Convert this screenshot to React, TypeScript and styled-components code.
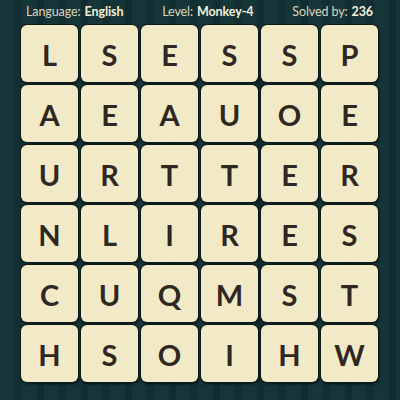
import React from "react";
import styled, { createGlobalStyle } from "styled-components";

const Global = createGlobalStyle`
  html, body { margin: 0; padding: 0; }
  body {
    width: 400px;
    height: 400px;
    overflow: hidden;
    background-color: #163337;
    background-image: repeating-linear-gradient(
      to right,
      #173639 0px, #173639 14px,
      #132f33 14px, #132f33 22px,
      #163538 22px, #163538 37px,
      #122d31 37px, #122d31 44px
    );
    font-family: "Lato", "Noto Sans", sans-serif;
  }
`;

const Page = styled.div`
  width: 400px;
  height: 400px;
  display: flex;
  flex-direction: column;
`;

const Header = styled.div`
  height: 25px;
  display: flex;
  align-items: center;
  justify-content: space-between;
  padding: 0 27px 2px 26px;
  box-sizing: border-box;
  font-size: 12.5px;
  letter-spacing: -0.1px;
  color: #d9d6bd;
`;

const Stat = styled.span`
  white-space: nowrap;
`;

const Value = styled.b`
  font-weight: 700;
  color: #f3efd9;
  margin-left: 4px;
`;

const Board = styled.div`
  display: grid;
  grid-template-columns: repeat(6, 57px);
  grid-auto-rows: 57px;
  gap: 3px;
  margin-left: 21px;
`;

const Tile = styled.div`
  background: #f2eac6;
  border-radius: 6px;
  box-shadow: 0 0 0 1px #0c1a1c, 1px 2px 3px rgba(0, 0, 0, 0.65);
  display: flex;
  align-items: center;
  justify-content: center;
  font-family: "Lato", "Noto Sans", sans-serif;
  font-weight: 700;
  font-size: 29px;
  color: #2f2822;
  padding-top: 1px;
  box-sizing: border-box;
`;

const rows = ["LSESSP", "AEAUOE", "URTTER", "NLIRES", "CUQMST", "HSOIHW"];

export default function App() {
  return (
    <Page>
      <Global />
      <Header>
        <Stat>
          Language:<Value>English</Value>
        </Stat>
        <Stat>
          Level:<Value>Monkey-4</Value>
        </Stat>
        <Stat>
          Solved by:<Value>236</Value>
        </Stat>
      </Header>
      <Board>
        {rows.flatMap((r, i) =>
          r.split("").map((c, j) => <Tile key={`${i}-${j}`}>{c}</Tile>)
        )}
      </Board>
    </Page>
  );
}
